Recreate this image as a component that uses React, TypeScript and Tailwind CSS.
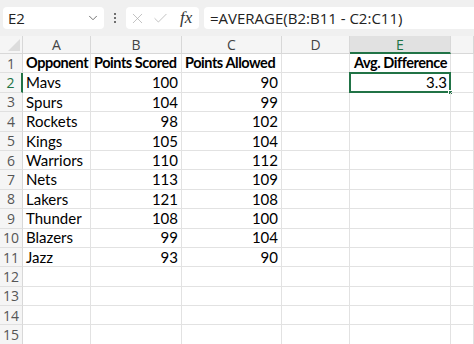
import { ChevronDown, X, Check } from "lucide-react";

const cols = ["A", "B", "C", "D", "E", ""];
const widths = ["w-[68px]", "w-[91px]", "w-[100px]", "w-[68px]", "w-[101px]", "flex-1"];

const data: [string, number, number][] = [
  ["Mavs", 100, 90],
  ["Spurs", 104, 99],
  ["Rockets", 98, 102],
  ["Kings", 105, 104],
  ["Warriors", 110, 112],
  ["Nets", 113, 109],
  ["Lakers", 121, 108],
  ["Thunder", 108, 100],
  ["Blazers", 99, 104],
  ["Jazz", 93, 90],
];

const cellFont = { fontFamily: "Lato, 'Open Sans', sans-serif" };

function Cell({
  i,
  children,
  right,
  bold,
}: {
  i: number;
  children?: React.ReactNode;
  right?: boolean;
  bold?: boolean;
}) {
  return (
    <div
      className={`${widths[i]} relative flex h-full shrink-0 items-center overflow-visible whitespace-nowrap border-b border-r border-[#e2e2e2] px-[3px] text-black ${
        right ? "justify-end" : ""
      } ${bold ? "text-[14.5px] font-bold tracking-[-0.45px]" : "text-[15px]"}`}
    >
      {children}
    </div>
  );
}

export default function App() {
  const rows = Array.from({ length: 15 }, (_, r) => r + 1);

  return (
    <div className="h-[344px] w-[474px] overflow-hidden bg-white" style={{ fontFamily: "'Segoe UI', 'Open Sans', sans-serif" }}>
      {/* formula bar */}
      <div className="flex h-[36px] items-center bg-[#f0f0f0] pl-[3px]">
        <div className="flex h-[22px] w-[101px] items-center justify-between rounded-[4px] bg-white pr-1 pl-[5px] text-[15px] text-[#222]">
          <span>E2</span>
          <ChevronDown size={14} strokeWidth={1.4} className="text-[#555]" />
        </div>
        <div className="flex w-[22px] flex-col items-center gap-[2px]">
          <span className="h-[2px] w-[2px] rounded-full bg-[#444]" />
          <span className="h-[2px] w-[2px] rounded-full bg-[#444]" />
          <span className="h-[2px] w-[2px] rounded-full bg-[#444]" />
        </div>
        <div className="flex h-[22px] w-[73px] items-center gap-[6px] rounded-[4px] bg-white pl-[3px]">
          <X size={17} strokeWidth={1} className="text-[#aaa]" />
          <Check size={17} strokeWidth={1} className="text-[#aaa]" />
          <span className="ml-[5px] text-[17px] italic text-[#333]" style={{ fontFamily: "'Liberation Serif', serif" }}>
            fx
          </span>
        </div>
        <div className="ml-[5px] flex h-[22px] flex-1 items-center rounded-l-[4px] bg-white pl-[6px] text-[15px] text-[#222]">
          =AVERAGE(B2:B11 - C2:C11)
        </div>
      </div>

      {/* column headers */}
      <div className="flex h-[18px] bg-[#f5f5f5]">
        <div className="relative w-[23px] shrink-0 border-r border-b border-[#d8d8d8]">
          <div
            className="absolute right-[2px] bottom-[2px] h-[12px] w-[12px] bg-[#dcdcdc]"
            style={{ clipPath: "polygon(100% 0, 100% 100%, 0 100%)" }}
          />
        </div>
        {cols.map((c, i) => (
          <div
            key={i}
            className={`${widths[i]} flex shrink-0 items-center justify-center border-r border-[#d8d8d8] text-[14px] ${
              c === "E" ? "border-b-2 border-b-[#217346] bg-[#e1e1e1] text-[#217346]" : "border-b text-[#444]"
            }`}
          >
            {c}
          </div>
        ))}
      </div>

      {/* rows */}
      {rows.map((r) => {
        const d = r >= 2 && r <= 11 ? data[r - 2] : null;
        return (
          <div key={r} className="flex h-[19.4px]" style={cellFont}>
            <div
              className={`flex w-[23px] shrink-0 items-center justify-center border-b border-[#e0e0e0] bg-[#f5f5f5] text-[14px] text-[#555] ${
                r === 2 ? "border-r-2 border-r-[#217346] bg-[#e1e1e1] text-[#217346]" : "border-r border-r-[#d8d8d8]"
              }`}
              style={{ fontFamily: "'Segoe UI', 'Open Sans', sans-serif" }}
            >
              {r}
            </div>
            {r === 1 ? (
              <>
                <Cell i={0} bold>Opponent</Cell>
                <Cell i={1} bold>Points Scored</Cell>
                <Cell i={2} bold>Points Allowed</Cell>
                <Cell i={3} />
                <Cell i={4} bold>
                  <span className="pl-[1px]">Avg. Difference</span>
                </Cell>
                <Cell i={5} />
              </>
            ) : (
              <>
                <Cell i={0}>{d?.[0]}</Cell>
                <Cell i={1} right>{d?.[1]}</Cell>
                <Cell i={2} right>{d?.[2]}</Cell>
                <Cell i={3} />
                <Cell i={4} right>
                  {r === 2 && (
                    <>
                      <span>3.3</span>
                      <div className="absolute -top-[1px] -left-[1px] -right-[1px] -bottom-[1px] border-2 border-[#217346]" />
                      <div className="absolute -right-[3px] -bottom-[3px] h-[5px] w-[5px] border border-white bg-[#217346]" />
                    </>
                  )}
                </Cell>
                <Cell i={5} />
              </>
            )}
          </div>
        );
      })}
    </div>
  );
}
